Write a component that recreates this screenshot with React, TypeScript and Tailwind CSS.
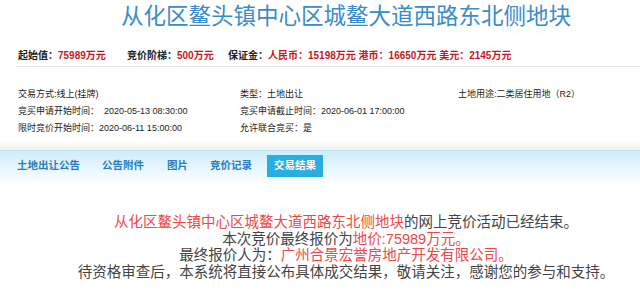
const font = { fontFamily: '"Liberation Sans", "Noto Sans CJK SC", sans-serif' };

function PriceRow() {
  return (
    <div className="mt-[12px] flex h-[22px] items-center border-b border-[#e6e6e6] pl-[2px] text-[10px] font-bold text-[#222]">
      <div className="w-[109px] whitespace-nowrap">
        起始值：<span className="text-[#c8161d]">75989万元</span>
      </div>
      <div className="w-[101px] whitespace-nowrap">
        竞价阶梯：<span className="text-[#c8161d]">500万元</span>
      </div>
      <div className="whitespace-nowrap">
        保证金：
        <span className="text-[#c8161d]">人民币：15198万元 港币：16650万元 美元：2145万元</span>
      </div>
    </div>
  );
}

const info = [
  ['交易方式:线上(挂牌)', '类型：土地出让', '土地用途:二类居住用地（R2）'],
  ['竞买申请开始时间：  2020-05-13 08:30:00', '竞买申请截止时间：2020-06-01 17:00:00', ''],
  ['限时竞价开始时间：2020-06-11 15:00:00', '允许联合竞买：是', ''],
];

function InfoTable() {
  return (
    <div className="mt-[19px] pl-[2px] text-[9px] text-[#222]">
      {info.map((row, i) => (
        <div key={i} className="grid h-[17px] grid-cols-[222px_218px_1fr] items-center whitespace-pre">
          {row.map((cell, j) => (
            <div key={j}>{cell}</div>
          ))}
        </div>
      ))}
    </div>
  );
}

function TabBar() {
  return (
    <div>
      <div className="h-[10px] bg-gradient-to-b from-white to-[#f1f1ee]" />
      <div className="h-[35px] border-t border-[#b4e3f6] bg-gradient-to-b from-[#cdeefb] to-white pt-[4px]">
        <div className="flex items-center pl-[17px] text-[10.5px] font-bold text-[#2b7dbf]">
          <span className="w-[85px]">土地出让公告</span>
          <span className="w-[65px]">公告附件</span>
          <span className="w-[43px]">图片</span>
          <span className="w-[57px]">竞价记录</span>
          <span className="flex h-[22px] w-[56px] items-center justify-center bg-[#28aee0] text-white">
            交易结果
          </span>
        </div>
      </div>
    </div>
  );
}

function Result() {
  const red = 'text-[#ef4848]';
  return (
    <div className="mt-[29px] ml-4 w-[660px] text-center text-[14.5px] leading-[16.5px] text-[#444]">
      <div>
        <span className={red}>从化区鳌头镇中心区城鳌大道西路东北侧地块</span>的网上竞价活动已经结束。
      </div>
      <div>
        本次竞价最终报价为<span className={red}>地价:75989万元。</span>
      </div>
      <div>
        最终报价人为：<span className={red}>广州合景宏誉房地产开发有限公司。</span>
      </div>
      <div className="whitespace-nowrap">
        待资格审查后，本系统将直接公布具体成交结果，敬请关注，感谢您的参与和支持。
      </div>
    </div>
  );
}

export default function App() {
  return (
    <div className="h-[296px] w-[640px] overflow-hidden bg-white" style={font}>
      <div className="ml-4 w-[660px]">
        <div className="flex h-[33px] items-center justify-center text-[22.5px] font-normal text-[#3a8ccd]">
          从化区鳌头镇中心区城鳌大道西路东北侧地块
        </div>
        <PriceRow />
        <InfoTable />
      </div>
      <div className="mt-[3px]">
        <TabBar />
      </div>
      <Result />
    </div>
  );
}
